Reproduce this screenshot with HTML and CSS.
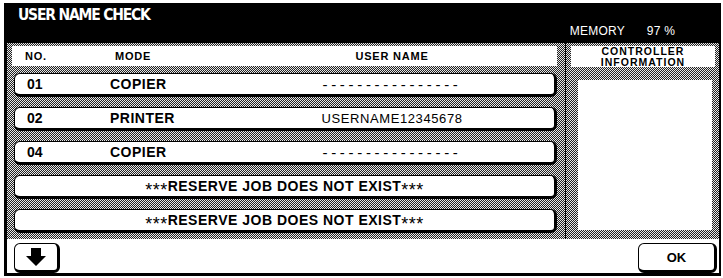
FILE: index.html
```html
<!DOCTYPE html>
<html>
<head>
<meta charset="utf-8">
<link rel="stylesheet" href="styles.css">
</head>
<body>
<div class="panel">
  <div class="titlebar">
    <div class="title">USER NAME CHECK</div>
    <div class="memory"><span>MEMORY</span><span>97 %</span></div>
  </div>
  <div class="main">
    <div class="list">
      <div class="list-head">
        <span class="c-no">NO.</span><span class="c-mode">MODE</span><span class="c-user">USER NAME</span>
      </div>
      <div class="rows">
        <div class="row"><span class="c-no">01</span><span class="c-mode">COPIER</span><span class="c-user dashes">----------------</span></div>
        <div class="row"><span class="c-no">02</span><span class="c-mode">PRINTER</span><span class="c-user uname">USERNAME12345678</span></div>
        <div class="row"><span class="c-no">04</span><span class="c-mode">COPIER</span><span class="c-user dashes">----------------</span></div>
        <div class="row empty"><span class="msg"><span class="ast">***</span>RESERVE JOB DOES NOT EXIST<span class="ast">***</span></span></div>
        <div class="row empty"><span class="msg"><span class="ast">***</span>RESERVE JOB DOES NOT EXIST<span class="ast">***</span></span></div>
      </div>
    </div>
    <div class="side">
      <div class="side-head"><span>CONTROLLER</span><span>INFORMATION</span></div>
      <div class="side-box"></div>
    </div>
  </div>
  <div class="footer">
    <button class="btn down"><svg width="20" height="18" viewBox="0 0 20 18"><polygon points="5,0 15,0 15,8 20,8 10,18 0,8 5,8" fill="#000"/></svg></button>
    <button class="btn ok">OK</button>
  </div>
</div>
</body>
</html>
```

FILE: styles.css
```css
body {
  margin: 0;
  background: #fff;
  font-family: "Liberation Sans", Arial, sans-serif;
  color: #000;
}

.panel {
  margin: 3px 0 0 4px;
  width: 717px;
  box-sizing: border-box;
  border-left: 3px solid #000;
  border-right: 2px solid #000;
  border-bottom: 3px solid #000;
}

.titlebar {
  height: 40px;
  background: #000;
  color: #fff;
  display: flex;
  justify-content: space-between;
  align-items: flex-start;
}

.title {
  padding: 5px 0 0 11px;
  font-family: "DejaVu Sans Condensed", "DejaVu Sans", sans-serif;
  font-weight: bold;
  font-size: 15.5px;
  line-height: 15px;
  letter-spacing: -1.2px;
}

.memory {
  padding: 22px 44px 0 0;
  display: flex;
  gap: 22px;
  font-size: 12px;
  line-height: 12px;
  letter-spacing: 0.2px;
}

.main {
  display: flex;
  height: 196px;
  background-image: repeating-conic-gradient(#222 0 25%, #e8e8e8 0 50%);
  background-size: 2px 2px;
}

.list {
  width: 559px;
  box-sizing: border-box;
  padding: 3px 8px 6px 5px;
  border-right: 1px solid #000;
}

.list-head {
  height: 20px;
  background: #fff;
  display: flex;
  align-items: center;
  padding-left: 13px;
  font-weight: bold;
  font-size: 11px;
  letter-spacing: 0.8px;
}

.list-head .c-no { width: 90px; }
.list-head .c-mode { width: 150px; }
.list-head .c-user { width: 254px; text-align: center; }

.rows {
  margin: 7px 0 0 2px;
  display: flex;
  flex-direction: column;
  gap: 10px;
}

.row {
  height: 24px;
  box-sizing: border-box;
  background: #fff;
  border: 1px solid #000;
  border-right-width: 3px;
  border-bottom-width: 3px;
  border-radius: 6px;
  display: flex;
  align-items: center;
  padding-left: 12px;
  font-weight: bold;
  font-size: 14px;
  letter-spacing: 0.5px;
  white-space: nowrap;
}

.row .c-no { width: 83px; letter-spacing: 0; }
.row .c-mode { width: 150px; }
.row .c-user { width: 264px; text-align: center; font-weight: normal; }

.dashes { font-size: 15px; letter-spacing: 3.7px; }
.uname { font-size: 13px; letter-spacing: 0.6px; }

.row.empty {
  justify-content: center;
  padding-left: 0;
}

.msg { line-height: 16px; }

.ast {
  font-weight: normal;
  font-size: 18px;
  line-height: 0;
  letter-spacing: 0.5px;
  vertical-align: -5px;
}

.side {
  width: 153px;
  box-sizing: border-box;
  padding: 3px 4px 0 5px;
}

.side-head {
  height: 21px;
  background: #fff;
  display: flex;
  flex-direction: column;
  align-items: center;
  justify-content: center;
  font-weight: bold;
  font-size: 10.5px;
  line-height: 10.5px;
  letter-spacing: 1px;
}

.side-box {
  margin: 13px 3px 0 7px;
  height: 150px;
  background: #fff;
}

.footer {
  height: 34px;
  box-sizing: border-box;
  background: #fff;
  display: flex;
  justify-content: space-between;
  align-items: flex-start;
  padding: 4px 2px 0 7px;
}

.btn {
  height: 30px;
  box-sizing: border-box;
  border: 1px solid #000;
  border-right-width: 3px;
  border-bottom-width: 3px;
  border-radius: 6px;
  background: #fff;
  padding: 0;
  display: flex;
  align-items: center;
  justify-content: center;
  font-family: inherit;
  color: #000;
}

.down { width: 46px; }

.ok {
  width: 79px;
  font-weight: bold;
  font-size: 13px;
}
```
